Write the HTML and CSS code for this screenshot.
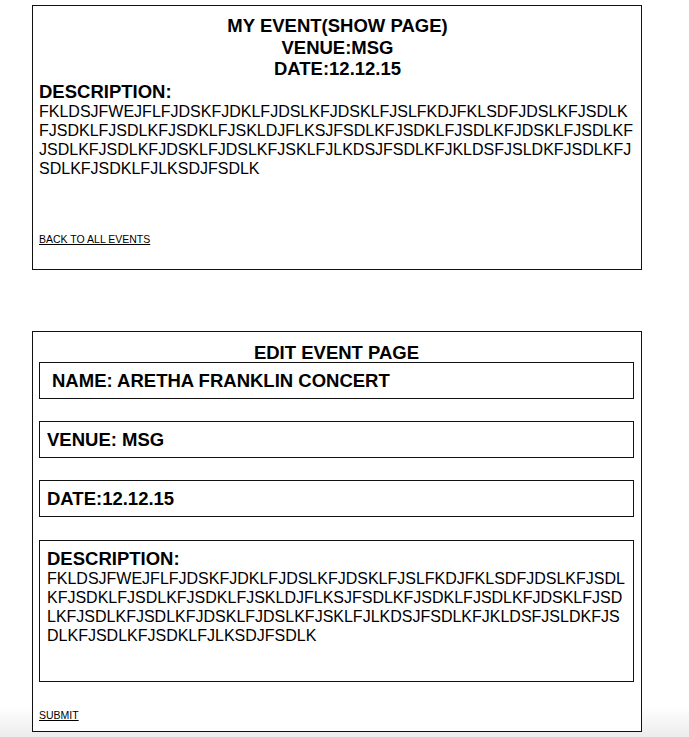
FILE: index.html
```html
<!DOCTYPE html>
<html lang="en">
<head>
    <meta charset="UTF-8">
    <meta name="viewport" content="width=device-width, initial-scale=1.0">
    <title>My Event</title>
    <link rel="stylesheet" href="styles.css">
</head>
<body>
    <div class="page">
        <div class="panel show-panel">
            <div class="show-title">
                <div>MY EVENT(SHOW PAGE)</div>
                <div>VENUE:MSG</div>
                <div>DATE:12.12.15</div>
            </div>
            <div class="desc-label">DESCRIPTION:</div>
            <p class="desc-text">FKLDSJFWEJFLFJDSKFJDKLFJDSLKFJDSKLFJSLFKDJFKLSDFJDSLKFJSDLKFJSDKLFJSDLKFJSDKLFJSKLDJFLKSJFSDLKFJSDKLFJSDLKFJDSKLFJSDLKFJSDLKFJSDLKFJDSKLFJDSLKFJSKLFJLKDSJFSDLKFJKLDSFJSLDKFJSDLKFJSDLKFJSDKLFJLKSDJFSDLK</p>
            <a href="#" class="small-link back-link">BACK TO ALL EVENTS</a>
        </div>

        <form class="panel edit-panel">
            <div class="edit-title">EDIT EVENT PAGE</div>
            <div class="field field-name">NAME: ARETHA FRANKLIN CONCERT</div>
            <div class="field">VENUE: MSG</div>
            <div class="field">DATE:12.12.15</div>
            <div class="field field-desc">
                <div class="desc-label">DESCRIPTION:</div>
                <p class="desc-text">FKLDSJFWEJFLFJDSKFJDKLFJDSLKFJDSKLFJSLFKDJFKLSDFJDSLKFJSDLKFJSDKLFJSDLKFJSDKLFJSKLDJFLKSJFSDLKFJSDKLFJSDLKFJDSKLFJSDLKFJSDLKFJSDLKFJDSKLFJDSLKFJSKLFJLKDSJFSDLKFJKLDSFJSLDKFJSDLKFJSDLKFJSDKLFJLKSDJFSDLK</p>
            </div>
            <a href="#" class="small-link submit-link">SUBMIT</a>
        </form>
    </div>
</body>
</html>
```

FILE: styles.css
```css
* {
    margin: 0;
    padding: 0;
    box-sizing: border-box;
}

html {
    min-height: 100%;
    background: linear-gradient(to bottom, #ffffff 0, #ffffff 706px, #ececec 737px) no-repeat;
}

body {
    font-family: "Liberation Sans", Arial, sans-serif;
    color: #000;
}

.page {
    padding: 5px 0 0 32px;
}

.panel {
    width: 610px;
    border: 1px solid #111;
    background: #fff;
}

/* show page */
.show-panel {
    height: 265px;
    padding: 9px 5px 0 6px;
}

.show-title {
    text-align: center;
    font-weight: bold;
    font-size: 18.5px;
    line-height: 21.5px;
}

.desc-label {
    font-weight: bold;
    font-size: 18.5px;
    line-height: 20px;
}

.show-panel .desc-label {
    margin-top: 2px;
}

.desc-text {
    font-size: 16px;
    line-height: 19px;
    word-break: break-all;
}

.small-link {
    display: block;
    width: max-content;
    color: #000;
    font-size: 10.5px;
    line-height: 12px;
    text-decoration: underline;
}

.back-link {
    margin-top: 55px;
}

/* edit page */
.edit-panel {
    margin-top: 61px;
    height: 401px;
    padding: 12px 7px 8px 6px;
}

.edit-title {
    text-align: center;
    font-weight: bold;
    font-size: 18.5px;
    line-height: 18px;
}

.field {
    height: 37px;
    border: 1px solid #111;
    display: flex;
    align-items: center;
    padding: 0 7px;
    margin-top: 22px;
    font-weight: bold;
    font-size: 18.5px;
}

.field-name {
    margin-top: 0;
    padding-left: 12px;
}

.field-desc {
    display: block;
    height: 142px;
    margin-top: 23px;
    padding: 8px 2px 0 7px;
    font-weight: normal;
}

.submit-link {
    margin-top: 27px;
}
```
